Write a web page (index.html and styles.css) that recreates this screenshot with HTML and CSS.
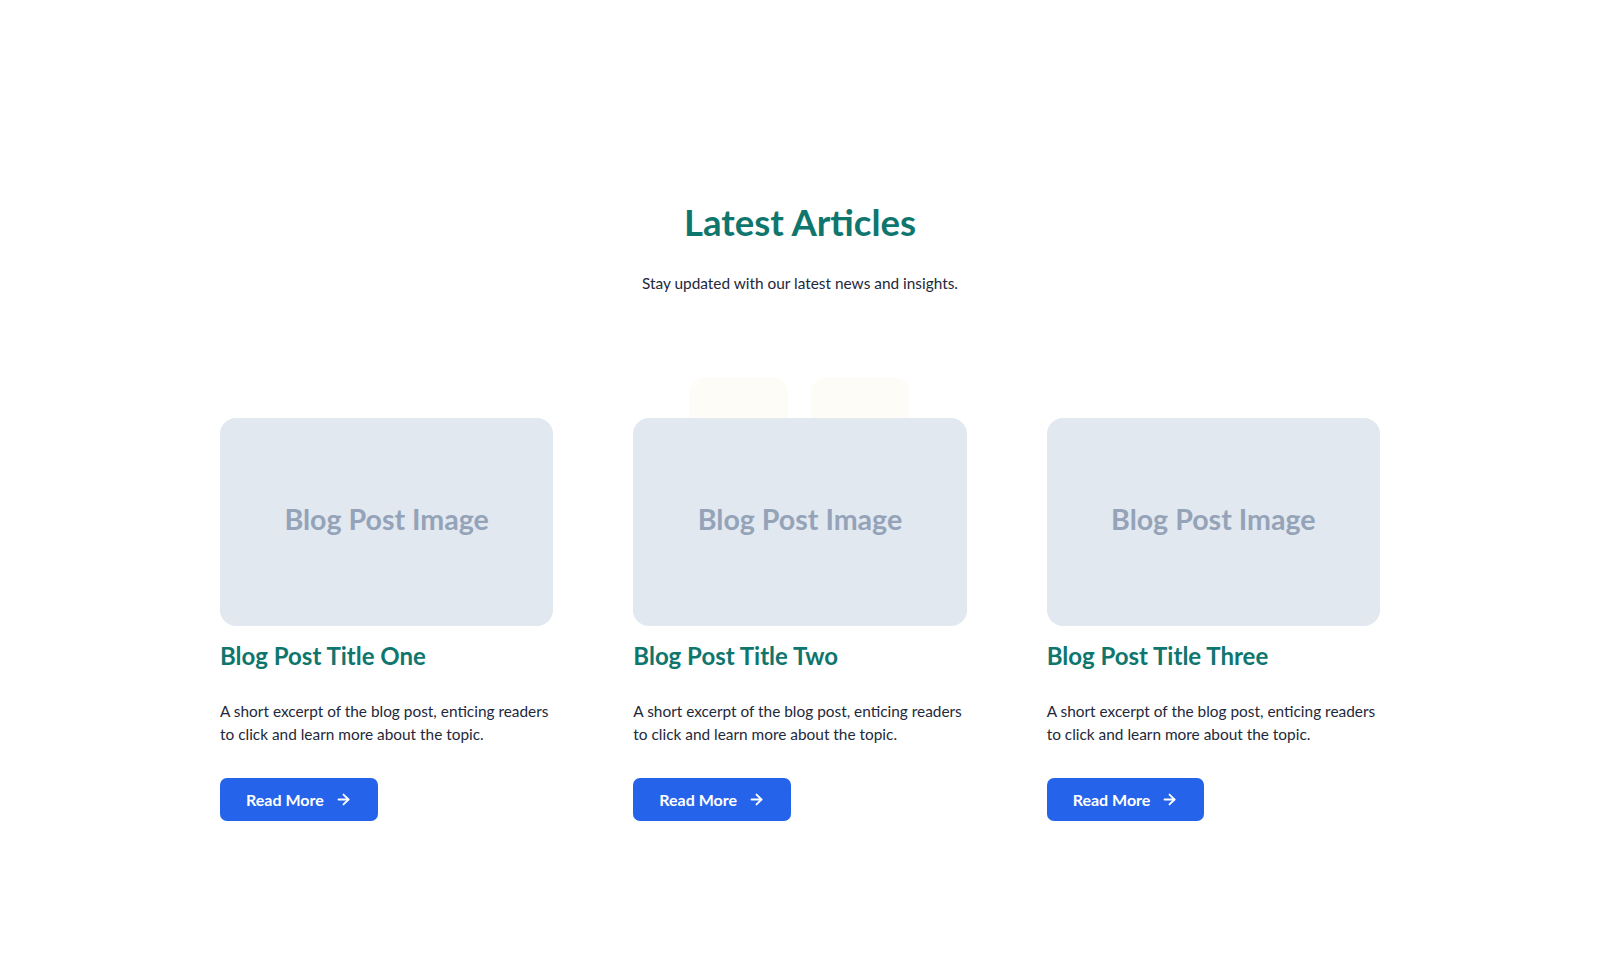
FILE: index.html
```html
<!DOCTYPE html>
<html lang="en">
<head>
<meta charset="utf-8">
<title>Latest Articles</title>
<link rel="stylesheet" href="styles.css">
</head>
<body>
<section class="articles">
  <header class="articles-head">
    <h2 class="articles-title">Latest Articles</h2>
    <p class="articles-sub">Stay updated with our latest news and insights.</p>
  </header>
  <div class="grid">
    <article class="card">
      <div class="card-img"><span>Blog Post Image</span></div>
      <h3 class="card-title">Blog Post Title One</h3>
      <p class="card-text">A short excerpt of the blog post, enticing readers to click and learn more about the topic.</p>
      <a class="btn" href="#">Read More
        <svg class="btn-icon" viewBox="0 0 24 24" width="17" height="17" fill="none" stroke="currentColor" stroke-width="2.6" stroke-linecap="round" stroke-linejoin="round"><path d="M5 12h14"/><path d="M12 5l7 7-7 7"/></svg>
      </a>
    </article>
    <article class="card card-mid">
      <div class="ghosts"><span class="ghost"></span><span class="ghost"></span></div>
      <div class="card-img"><span>Blog Post Image</span></div>
      <h3 class="card-title">Blog Post Title Two</h3>
      <p class="card-text">A short excerpt of the blog post, enticing readers to click and learn more about the topic.</p>
      <a class="btn" href="#">Read More
        <svg class="btn-icon" viewBox="0 0 24 24" width="17" height="17" fill="none" stroke="currentColor" stroke-width="2.6" stroke-linecap="round" stroke-linejoin="round"><path d="M5 12h14"/><path d="M12 5l7 7-7 7"/></svg>
      </a>
    </article>
    <article class="card">
      <div class="card-img"><span>Blog Post Image</span></div>
      <h3 class="card-title">Blog Post Title Three</h3>
      <p class="card-text">A short excerpt of the blog post, enticing readers to click and learn more about the topic.</p>
      <a class="btn" href="#">Read More
        <svg class="btn-icon" viewBox="0 0 24 24" width="17" height="17" fill="none" stroke="currentColor" stroke-width="2.6" stroke-linecap="round" stroke-linejoin="round"><path d="M5 12h14"/><path d="M12 5l7 7-7 7"/></svg>
      </a>
    </article>
  </div>
</section>
</body>
</html>
```

FILE: styles.css
```css
* { box-sizing: border-box; }
html, body { margin: 0; padding: 0; background: #ffffff; }
body {
  font-family: "Lato", "Inter", sans-serif;
  color: #1e293b;
}
.articles {
  width: 1160px;
  margin: 0 auto;
  padding: 198px 0 0;
}
.articles-head { text-align: center; }
.articles-title {
  margin: 0;
  font-size: 36.5px;
  line-height: 48px;
  font-weight: 700;
  color: #0f766e;
}
.articles-sub {
  margin: 25px 0 0;
  font-size: 15.4px;
  line-height: 24px;
  color: #1e293b;
}
.grid {
  display: grid;
  grid-template-columns: repeat(3, 1fr);
  gap: 80px;
  margin-top: 123px;
}
.card { position: relative; }
.ghosts {
  position: absolute;
  top: -41px;
  left: 0;
  right: 0;
  display: flex;
  justify-content: center;
  gap: 23px;
  z-index: 0;
}
.ghost {
  width: 99px;
  height: 60px;
  border-radius: 16px;
  background: #fdfcf6;
}
.card-img {
  position: relative;
  z-index: 1;
  height: 208px;
  padding-bottom: 6px;
  border-radius: 16px;
  background: #e2e8f0;
  display: flex;
  align-items: center;
  justify-content: center;
}
.card-img span {
  font-family: "Lato", sans-serif;
  font-weight: 700;
  font-size: 28.6px;
  color: #94a3b8;
}
.card-title {
  margin: 14px 0 0;
  font-size: 24px;
  line-height: 32px;
  font-weight: 700;
  color: #0f766e;
}
.card-text {
  margin: 28px 0 0;
  font-size: 15.4px;
  line-height: 22.5px;
  color: #1e293b;
}
.btn {
  margin-top: 33px;
  display: inline-flex;
  align-items: center;
  gap: 11px;
  height: 43px;
  padding: 0 26px;
  border-radius: 7px;
  background: #2563eb;
  color: #ffffff;
  text-decoration: none;
  font-size: 16px;
  font-weight: 700;
}
.btn-icon { display: block; }
```
